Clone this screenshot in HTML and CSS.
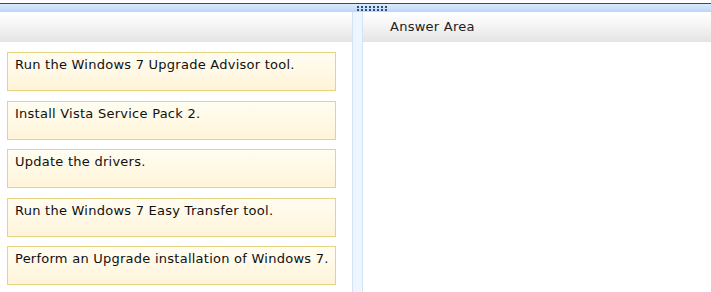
FILE: index.html
```html
<!DOCTYPE html>
<html lang="en">
<head>
    <meta charset="UTF-8">
    <title>Answer Area</title>
    <link rel="stylesheet" href="styles.css">
</head>
<body>
<div class="topbar">
    <div class="grip"></div>
</div>
<div class="main">
    <div class="pane left">
        <div class="pane-head"></div>
        <ul class="items">
            <li>Run the Windows 7 Upgrade Advisor tool.</li>
            <li>Install Vista Service Pack 2.</li>
            <li>Update the drivers.</li>
            <li>Run the Windows 7 Easy Transfer tool.</li>
            <li>Perform an Upgrade installation of Windows 7.</li>
        </ul>
    </div>
    <div class="splitter"></div>
    <div class="pane right">
        <div class="pane-head">Answer Area</div>
    </div>
</div>
</body>
</html>
```

FILE: styles.css
```css
@charset "UTF-8";
/* reset */
body,ul,li{margin:0;padding:0}
ul{list-style:none}
body{
    font:13px/16px "DejaVu Sans", Verdana, sans-serif;
    letter-spacing:0.25px;
    color:#111;
    background:#fff;
    width:711px;
    height:292px;
    overflow:hidden;
}

/* top strip with the grip */
.topbar{
    margin-top:3px;
    height:8px;
    border-top:1px solid #2f4d6e;
    background:linear-gradient(#dceafb,#bdd6f6);
    padding-left:357px;
    display:flex;
    align-items:center;
}
.grip{
    width:31px;
    height:5px;
    background:
        radial-gradient(circle at 1px 1px,#2b4f7c 1px,transparent 1.2px) 0 0/4px 3px repeat;
}

.main{
    display:flex;
    height:280px;
}
.pane-head{
    height:30px;
    line-height:30px;
    background:linear-gradient(#fefefe 0%,#f6f6f6 40%,#e4e4e4 100%);
}
.left{
    width:352px;
}
.right{
    flex:1;
}
.right .pane-head{
    padding-left:27px;
    color:#222;
}

.splitter{
    width:9px;
    background:#edf5fe;
    border-left:1px solid #d3e3f4;
    border-right:1px solid #d3e3f4;
}

.items{
    padding:10px 0 0 7px;
}
.items li{
    box-sizing:border-box;
    width:329px;
    height:39px;
    margin-bottom:9.5px;
    padding:4px 7px 0;
    border:1px solid #e8d37f;
    background:linear-gradient(#fffdf2,#fff4d8);
    color:#111;
    white-space:nowrap;
}
```
